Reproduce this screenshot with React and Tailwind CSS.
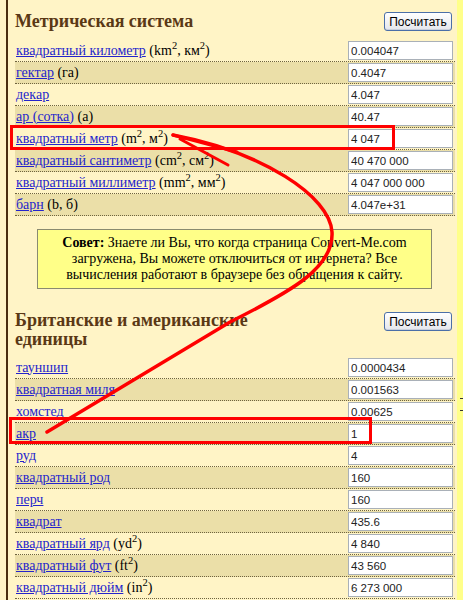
const metric = [
  { name: 'квадратный километр', extra: <> (km<sup>2</sup>, км<sup>2</sup>)</>, value: '0.004047' },
  { name: 'гектар', extra: ' (га)', value: '0.4047' },
  { name: 'декар', value: '4.047' },
  { name: 'ар (сотка)', extra: ' (а)', value: '40.47' },
  { name: 'квадратный метр', extra: <> (m<sup>2</sup>, м<sup>2</sup>)</>, value: '4 047' },
  { name: 'квадратный сантиметр', extra: <> (cm<sup>2</sup>, см<sup>2</sup>)</>, value: '40 470 000' },
  { name: 'квадратный миллиметр', extra: <> (mm<sup>2</sup>, мм<sup>2</sup>)</>, value: '4 047 000 000' },
  { name: 'барн', extra: ' (b, б)', value: '4.047e+31' },
]

const british = [
  { name: 'тауншип', value: '0.0000434' },
  { name: 'квадратная миля', value: '0.001563' },
  { name: 'хомстед', value: '0.00625' },
  { name: 'акр', value: '1' },
  { name: 'руд', value: '4' },
  { name: 'квадратный род', value: '160' },
  { name: 'перч', value: '160' },
  { name: 'квадрат', value: '435.6' },
  { name: 'квадратный ярд', extra: <> (yd<sup>2</sup>)</>, value: '4 840' },
  { name: 'квадратный фут', extra: <> (ft<sup>2</sup>)</>, value: '43 560' },
  { name: 'квадратный дюйм', extra: <> (in<sup>2</sup>)</>, value: '6 273 000' },
]

function CalcButton() {
  return (
    <button className="mr-[3px] mt-[1px] h-[19px] w-[68px] rounded-[3px] border border-[#4b6fa8] bg-gradient-to-b from-white to-[#e4e6ec] font-['Liberation_Sans',sans-serif] text-[12px] leading-none text-black shadow-[inset_0_-1px_0_#c9cfdc]">
      Посчитать
    </button>
  )
}

function Row({ row, i }) {
  return (
    <div
      className={`flex h-[22px] items-center justify-between border-b border-dotted border-[#6f6440] ${
        i % 2 ? 'bg-[#ebdfa8]' : ''
      }`}
    >
      <div className="pl-[1px] text-[14px] leading-none text-black">
        <a href="#" className="text-[#2424cc] underline">
          {row.name}
        </a>
        {row.extra}
      </div>
      <input
        readOnly
        value={row.value}
        className="mr-[2px] h-[19px] w-[105px] border border-[#a9b0b8] bg-white px-[2px] font-['Liberation_Sans',sans-serif] text-[11.5px] text-[#222] outline-none"
      />
    </div>
  )
}

export default function App() {
  return (
    <div className="relative h-[600px] w-[463px] overflow-hidden bg-[#fff4c6] font-['Liberation_Serif',serif]">
      <div className="flex h-full">
        <div className="w-[6px]" />
        <div className="w-[2px] bg-[#4a2e10]" />
        <div className="w-[449px] pl-[7px] pr-[2px]">
          <div className="flex h-[40px] items-start justify-between pt-[11px]">
            <h2 className="text-[18px] font-bold leading-[20px] text-[#5a3815]">Метрическая система</h2>
            <CalcButton />
          </div>
          {metric.map((r, i) => (
            <Row key={r.name} row={r} i={i} />
          ))}

          <div className="ml-[22px] mr-[23px] mt-[13px] h-[60px] border border-[#8a8a70] bg-[#ffff88] px-2 pt-[5px] text-center text-[14px] leading-[16px] text-black">
            <b>Совет:</b> Знаете ли Вы, что когда страница Convert-Me.com загружена, Вы можете отключиться от интернета? Все
            вычисления работают в браузере без обращения к сайту.
          </div>

          <div className="flex h-[68px] items-start justify-between pt-[22px]">
            <h2 className="w-[260px] text-[18px] font-bold leading-[19px] text-[#5a3815]">
              Британские и американские единицы
            </h2>
            <CalcButton />
          </div>
          {british.map((r, i) => (
            <Row key={r.name} row={r} i={i} />
          ))}
        </div>
        <div className="w-[6px] bg-[#ffff8a]" />
      </div>

      <div className="absolute right-0 top-[398px] h-[1px] w-[3px] bg-[#333]" />
      <div className="absolute right-0 top-[410px] h-[1px] w-[3px] bg-[#333]" />

      <svg className="pointer-events-none absolute left-0 top-0" width="463" height="600" viewBox="0 0 463 600">
        <rect x="11.5" y="126.5" width="382" height="22" fill="none" stroke="#ff0000" strokeWidth="3" />
        <rect x="10.5" y="418.5" width="360" height="24" fill="none" stroke="#ff0000" strokeWidth="3" />
        <path
          d="M47 432 L230 322 C290 292 334 268 332 232 C330 196 262 152 173 135"
          fill="none"
          stroke="#ff0000"
          strokeWidth="3.5"
          strokeLinecap="round"
        />
        <path d="M173 135 L237 152 M180 139 L228 165" fill="none" stroke="#ff0000" strokeWidth="3" strokeLinecap="round" />
      </svg>
    </div>
  )
}
